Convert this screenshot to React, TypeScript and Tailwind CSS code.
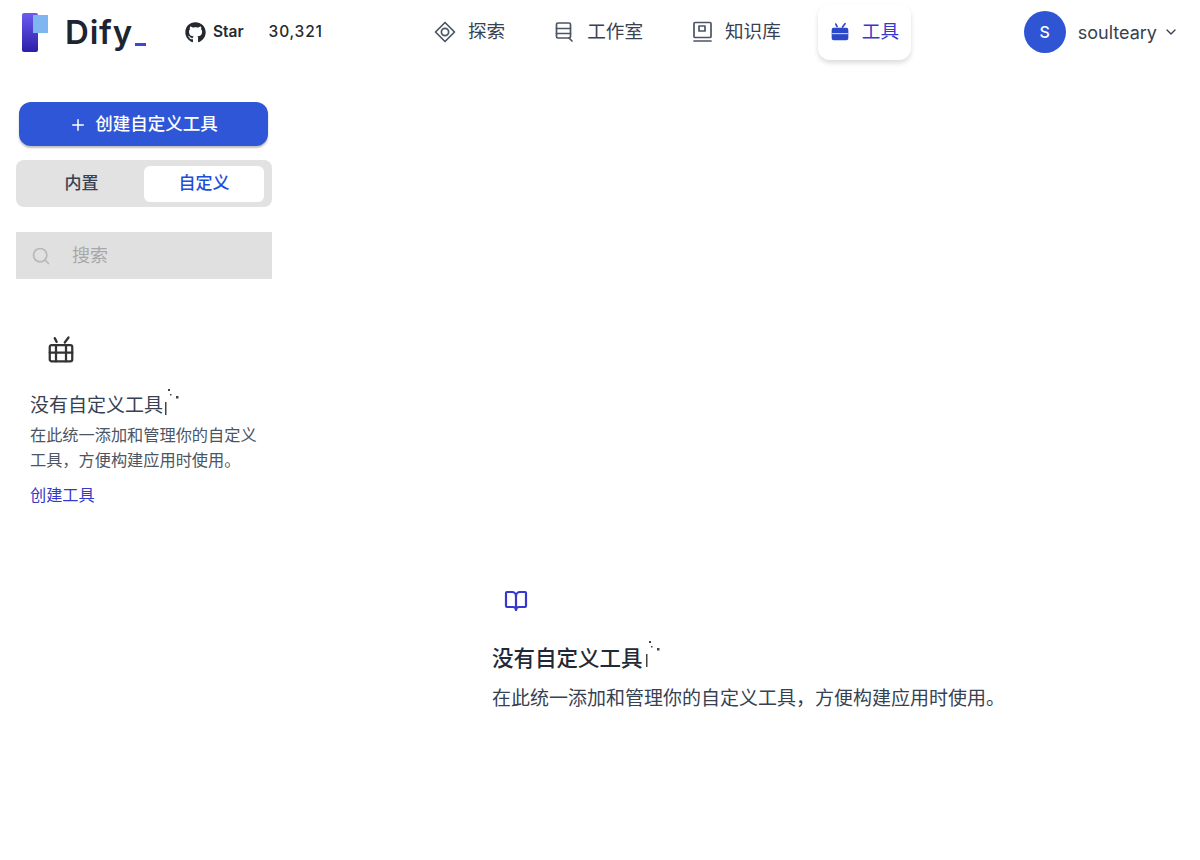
import { FaGithub } from "react-icons/fa";
import { ChevronDown, Plus, Search, BookOpen } from "lucide-react";

function Sparkle({ className }: { className: string }) {
  return (
    <svg className={className} width="18" height="28" viewBox="0 0 18 28" fill="#444">
      <rect x="3" y="0" width="2" height="2" />
      <rect x="5" y="5" width="1.5" height="1.5" />
      <rect x="11" y="7" width="2.5" height="2.5" />
      <rect x="0" y="13" width="1.5" height="13" />
    </svg>
  );
}

function ToolIcon({ solid, className }: { solid?: boolean; className: string }) {
  return (
    <svg className={className} viewBox="0 0 24 24" fill={solid ? "#2b48c8" : "none"} stroke={solid ? "#2b48c8" : "#333"} strokeWidth={solid ? 2 : 1.8} strokeLinecap="round" strokeLinejoin="round">
      <path d="M7 2.5l1.5 3M18 2l-3 4" />
      <rect x="3" y="8" width="18" height="13" rx="1.5" />
      <path d="M3 14h18" stroke={solid ? "#ffffff" : "#333"} strokeWidth={solid ? 1 : 1.8} />
      {!solid && <path d="M8 8v13M16 8v13" />}
    </svg>
  );
}

function ExploreIcon() {
  return (
    <svg width="22" height="22" viewBox="0 0 22 22" fill="none" stroke="#4b5563" strokeWidth="1.7" strokeLinejoin="round">
      <path d="M11 1.5l9.5 9.5-9.5 9.5L1.5 11z" />
      <circle cx="11" cy="11" r="3.6" />
    </svg>
  );
}

function StudioIcon() {
  return (
    <svg width="21" height="22" viewBox="0 0 21 22" fill="none" stroke="#4b5563" strokeWidth="1.7" strokeLinecap="round" strokeLinejoin="round">
      <rect x="2.5" y="2" width="14" height="15" rx="1.5" />
      <path d="M2.5 7.5h14M2.5 12.5h14M15 17l3 3" />
    </svg>
  );
}

function KnowledgeIcon() {
  return (
    <svg width="21" height="22" viewBox="0 0 21 22" fill="none" stroke="#4b5563" strokeWidth="1.7" strokeLinecap="round" strokeLinejoin="round">
      <rect x="2" y="1.5" width="17" height="15" rx="1" />
      <rect x="7" y="5" width="6" height="5" />
      <path d="M2 20h17" />
    </svg>
  );
}

function NavItem({ icon, label, active }: { icon: React.ReactNode; label: string; active?: boolean }) {
  return (
    <div className={`flex h-[56px] items-center gap-3 rounded-xl px-3 text-[18.6px] ${active ? "bg-white text-[#3538cd] shadow-[0_3px_5px_rgba(0,0,0,0.14)]" : "text-[#374151]"}`}>
      {icon}
      <span>{label}</span>
    </div>
  );
}

export default function App() {
  return (
    <div className="h-[860px] w-[1200px] overflow-hidden bg-white font-['Inter','Noto_Sans_CJK_SC',sans-serif] text-[#1f2937]">
      <header className="flex h-[64px] items-center pl-5 pr-[21px]">
        <div className="flex w-[400px] items-center">
          <svg width="32" height="44" viewBox="0 0 32 44" className="shrink-0">
            <defs>
              <linearGradient id="logo" x1="0" y1="0" x2="0" y2="1">
                <stop offset="0" stopColor="#6a5cf0" />
                <stop offset="1" stopColor="#2c1ea8" />
              </linearGradient>
            </defs>
            <rect x="2" y="3" width="16" height="39" rx="2" fill="url(#logo)" />
            <rect x="13" y="5" width="15" height="18" fill="#7fb6f2" />
          </svg>
          <span className="ml-[13px] text-[33px] leading-none font-semibold tracking-[0.8px] text-[#1d2433]">Dify</span>
          <span className="mt-[24px] ml-[2px] h-[3px] w-[11px] bg-[#3b45e0]" />
          <div className="ml-[39px] flex items-center">
            <FaGithub className="text-[21px] text-[#24292f]" />
            <span className="ml-[7px] text-[15.5px] font-semibold text-[#24292f]">Star</span>
            <span className="ml-[25px] text-[15.5px] font-medium tracking-[0.8px] text-[#24292f]">30,321</span>
          </div>
        </div>
        <nav className="ml-[2px] flex items-center gap-[25px]">
          <NavItem icon={<ExploreIcon />} label="探索" />
          <NavItem icon={<StudioIcon />} label="工作室" />
          <NavItem icon={<KnowledgeIcon />} label="知识库" />
          <NavItem icon={<ToolIcon solid className="h-[20px] w-[20px]" />} label="工具" active />
        </nav>
        <div className="ml-auto flex items-center">
          <div className="flex h-[42px] w-[42px] items-center justify-center rounded-full bg-[#2f55d4] text-[16px] font-medium text-white">S</div>
          <span className="ml-[12px] text-[18px] text-[#374151]">soulteary</span>
          <ChevronDown size={16} className="ml-[6px] text-[#374151]" />
        </div>
      </header>
      <div className="flex">
        <aside className="w-[290px] shrink-0 pl-4 pt-[38px]">
          <div className="w-[256px]">
            <button className="mx-[3px] flex h-[44px] w-[249px] items-center justify-center gap-[8px] rounded-xl bg-[#3056d8] pt-[1px] text-[17.5px] font-medium text-white shadow-[0_2px_2px_rgba(0,0,0,0.25)]">
              <Plus size={18} />
              <span>创建自定义工具</span>
            </button>
            <div className="mt-[14px] flex h-[47px] items-center rounded-lg bg-[#e2e2e2] pl-[3px] pr-[8px]">
              <div className="flex h-[36px] flex-1 items-center justify-center text-[17px] font-medium text-[#374151]">内置</div>
              <div className="flex h-[36px] w-[120px] items-center justify-center rounded-md bg-white text-[17px] font-medium text-[#1d4ed8]">自定义</div>
            </div>
            <div className="mt-[25px] flex h-[47px] items-center gap-[21px] bg-[#e0e0e0] pl-[15px] text-[18px] text-[#a8a8a8]">
              <Search size={20} className="text-[#b8b8b8]" />
              <span>搜索</span>
            </div>
          </div>
          <div className="pl-[14px] pt-[56px]">
            <ToolIcon className="ml-[16px] h-[30px] w-[30px]" />
            <div className="relative mt-[28px] inline-block text-[19px] leading-[26px] text-[#374151]">
              没有自定义工具
              <Sparkle className="absolute top-[-4px] left-full ml-[2px]" />
            </div>
            <p className="mt-[4px] w-[232px] text-[16.2px] leading-[25px] text-[#4b5563]">在此统一添加和管理你的自定义工具，方便构建应用时使用。</p>
            <div className="mt-[10px] text-[16.2px] leading-[24px] text-[#3538cd]">创建工具</div>
          </div>
        </aside>
        <main className="flex-1 pl-[202px] pt-[525px]">
          <BookOpen size={24} strokeWidth={2.2} className="ml-[12px] text-[#3538cd]" />
          <div className="relative mt-[31px] inline-block text-[21.5px] leading-[28px] font-medium text-[#1f2937]">
            没有自定义工具
            <Sparkle className="absolute top-[-3px] left-full ml-[3px]" />
          </div>
          <p className="mt-[13px] text-[19px] leading-[28px] whitespace-nowrap text-[#374151]">在此统一添加和管理你的自定义工具，方便构建应用时使用。</p>
        </main>
      </div>
    </div>
  );
}
